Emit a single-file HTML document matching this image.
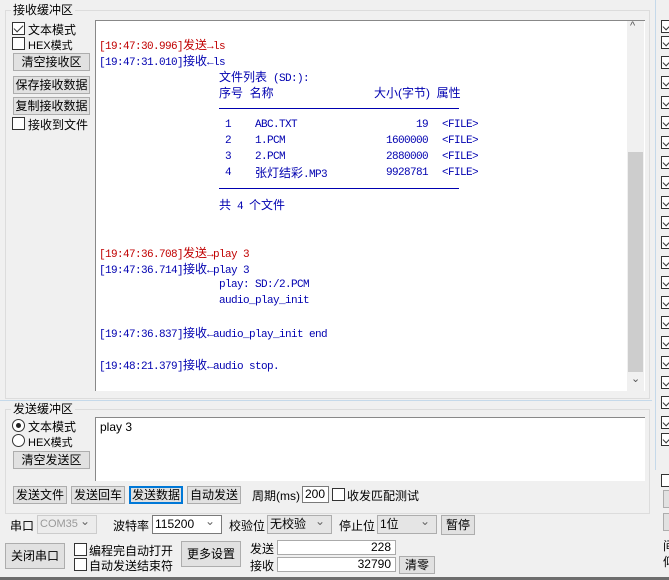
<!DOCTYPE html>
<html><head><meta charset="utf-8"><style>
*{margin:0;padding:0;box-sizing:border-box}
body{width:669px;height:580px;background:#f0f0f0;position:relative;overflow:hidden;font-family:"Liberation Sans","Noto Sans CJK SC",sans-serif;font-size:12px;color:#000}
.a{position:absolute;white-space:nowrap}
.grp{position:absolute;border:1px solid #dcdcdc}
.lbl{position:absolute;background:#f0f0f0;padding:0 2px;font-size:12px;line-height:14px}
.cb{position:absolute;width:13px;height:13px;border:1px solid #333;background:#fff}
.cb.c::after,.rcb::after{content:"";position:absolute;left:3px;top:0px;width:4px;height:8px;border:solid #333;border-width:0 1.5px 1.5px 0;transform:rotate(45deg)}
.rb{position:absolute;width:13px;height:13px;border:1px solid #333;border-radius:50%;background:#fff}
.rb.c::after{content:"";position:absolute;left:3px;top:3px;width:5px;height:5px;border-radius:50%;background:#222}
.btn{position:absolute;background:#e1e1e1;border:1px solid #adadad;text-align:center;font-size:12px}
.t{position:absolute;white-space:nowrap;font-family:"Liberation Mono","Noto Sans CJK SC",monospace;font-size:11px;letter-spacing:-0.6px;line-height:16px;color:#0000b0}
.t .z{font-family:"Liberation Sans","Noto Sans CJK SC",sans-serif;font-size:12px;letter-spacing:0}
.r{color:#c00000}
.inp{position:absolute;background:#fff;border:1px solid #7a7a7a;font-size:12px;padding-left:2px}
.sel{position:absolute;background:#fff;border:1px solid #7a7a7a;font-size:12px;padding-left:2px;line-height:17px}
.sel::after{content:"⌄";position:absolute;right:6px;top:-3px;color:#666;font-size:12px}
.rcb{position:absolute;left:661px;width:10px;height:13px;border:1px solid #333;background:#fff}
.rcb.u::after{display:none}
</style></head><body>
<div class="grp" style="left:5px;top:10px;width:645px;height:389px"></div>
<div class="lbl" style="left:11px;top:3px">接收缓冲区</div>
<div class="cb c" style="left:12px;top:22px"></div><div class="a" style="left:28px;top:21px">文本模式</div>
<div class="cb" style="left:12px;top:37px"></div><div class="a" style="left:28px;top:37px;font-size:11px">HEX模式</div>
<div class="btn" style="left:13px;top:53px;width:77px;height:18px;line-height:16px">清空接收区</div>
<div class="btn" style="left:13px;top:76px;width:77px;height:18px;line-height:16px">保存接收数据</div>
<div class="btn" style="left:13px;top:97px;width:77px;height:18px;line-height:16px">复制接收数据</div>
<div class="cb" style="left:12px;top:117px"></div><div class="a" style="left:28px;top:116px">接收到文件</div>
<div class="a" style="left:95px;top:20px;width:550px;height:371px;background:#fff;border-left:1px solid #888;border-top:1px solid #888"></div>
<div class="a" style="left:627px;top:21px;width:17px;height:370px;background:#f0f0f0"></div>
<div class="a" style="left:628px;top:152px;width:15px;height:220px;background:#cdcdcd"></div>
<div class="a" style="left:630px;top:20px;font-size:11px;color:#555">^</div>
<div class="a" style="left:631px;top:372px;font-size:11px;color:#555">⌄</div>
<div class="t r" style="left:99px;top:37px">[19:47:30.996]<span class="z">发送</span>→ls</div>
<div class="t" style="left:99px;top:53px">[19:47:31.010]<span class="z">接收</span>←ls</div>
<div class="t" style="left:219px;top:69px"><span class="z">文件列表</span> (SD:):</div>
<div class="t" style="left:219px;top:85px"><span class="z">序号&nbsp;&nbsp;名称</span></div>
<div class="t" style="left:374px;top:85px"><span class="z">大小(字节)&nbsp;&nbsp;属性</span></div>
<div class="a" style="left:219px;top:108px;width:240px;height:1px;background:#0000b0"></div>
<div class="t" style="left:225px;top:117px">1</div><div class="t" style="left:255px;top:117px">ABC.TXT</div><div class="t" style="left:416px;top:117px">19</div><div class="t" style="left:442px;top:117px">&lt;FILE&gt;</div>
<div class="t" style="left:225px;top:133px">2</div><div class="t" style="left:255px;top:133px">1.PCM</div><div class="t" style="left:386px;top:133px">1600000</div><div class="t" style="left:442px;top:133px">&lt;FILE&gt;</div>
<div class="t" style="left:225px;top:149px">3</div><div class="t" style="left:255px;top:149px">2.PCM</div><div class="t" style="left:386px;top:149px">2880000</div><div class="t" style="left:442px;top:149px">&lt;FILE&gt;</div>
<div class="t" style="left:225px;top:165px">4</div><div class="t" style="left:255px;top:165px"><span class="z">张灯结彩</span>.MP3</div><div class="t" style="left:386px;top:165px">9928781</div><div class="t" style="left:442px;top:165px">&lt;FILE&gt;</div>
<div class="a" style="left:219px;top:188px;width:240px;height:1px;background:#0000b0"></div>
<div class="t" style="left:219px;top:197px"><span class="z">共</span> 4 <span class="z">个文件</span></div>
<div class="t r" style="left:99px;top:245px">[19:47:36.708]<span class="z">发送</span>→play 3</div>
<div class="t" style="left:99px;top:261px">[19:47:36.714]<span class="z">接收</span>←play 3</div>
<div class="t" style="left:219px;top:277px">play: SD:/2.PCM</div>
<div class="t" style="left:219px;top:293px">audio_play_init</div>
<div class="t" style="left:99px;top:325px">[19:47:36.837]<span class="z">接收</span>←audio_play_init end</div>
<div class="t" style="left:99px;top:357px">[19:48:21.379]<span class="z">接收</span>←audio stop.</div>
<div class="a" style="left:0;top:400px;width:652px;height:1px;background:#c5d9ea"></div>
<div class="a" style="left:655px;top:0;width:1px;height:470px;background:#c5d9ea"></div>
<div class="grp" style="left:5px;top:409px;width:645px;height:105px"></div>
<div class="lbl" style="left:11px;top:402px">发送缓冲区</div>
<div class="rb c" style="left:12px;top:419px"></div><div class="a" style="left:28px;top:418px">文本模式</div>
<div class="rb" style="left:12px;top:434px"></div><div class="a" style="left:28px;top:434px;font-size:11px">HEX模式</div>
<div class="btn" style="left:13px;top:451px;width:77px;height:18px;line-height:16px">清空发送区</div>
<div class="a" style="left:95px;top:417px;width:550px;height:64px;background:#fff;border-left:1px solid #888;border-top:1px solid #888;padding:2px 4px">play 3</div>
<div class="btn" style="left:13px;top:486px;width:54px;height:18px;line-height:16px">发送文件</div>
<div class="btn" style="left:71px;top:486px;width:54px;height:18px;line-height:16px">发送回车</div>
<div class="btn" style="left:129px;top:486px;width:54px;height:18px;border:2px solid #0078d7;line-height:14px">发送数据</div>
<div class="btn" style="left:187px;top:486px;width:54px;height:18px;line-height:16px">自动发送</div>
<div class="a" style="left:252px;top:487px">周期(ms)</div>
<div class="inp" style="left:302px;top:486px;width:27px;height:17px;line-height:15px">200</div>
<div class="cb" style="left:332px;top:488px"></div><div class="a" style="left:347px;top:487px">收发匹配测试</div>
<div class="a" style="left:10px;top:517px">串口</div>
<div class="sel" style="left:37px;top:515px;width:60px;height:19px;background:#ececec;border-color:#ccc;color:#999;font-size:11px">COM35</div>
<div class="a" style="left:113px;top:517px">波特率</div>
<div class="sel" style="left:152px;top:515px;width:70px;height:19px">115200</div>
<div class="a" style="left:229px;top:517px">校验位</div>
<div class="sel" style="left:267px;top:515px;width:65px;height:19px;background:#e5e5e5;border-color:#adadad">无校验</div>
<div class="a" style="left:339px;top:517px">停止位</div>
<div class="sel" style="left:377px;top:515px;width:60px;height:19px;background:#e5e5e5;border-color:#adadad">1位</div>
<div class="btn" style="left:441px;top:515px;width:34px;height:20px;line-height:18px">暂停</div>
<div class="btn" style="left:5px;top:543px;width:60px;height:26px;line-height:24px">关闭串口</div>
<div class="cb" style="left:74px;top:543px"></div><div class="a" style="left:89px;top:542px">编程完自动打开</div>
<div class="cb" style="left:74px;top:558px"></div><div class="a" style="left:89px;top:557px">自动发送结束符</div>
<div class="btn" style="left:181px;top:541px;width:60px;height:26px;line-height:24px">更多设置</div>
<div class="a" style="left:250px;top:540px">发送</div>
<div class="a" style="left:250px;top:557px">接收</div>
<div class="inp" style="left:277px;top:540px;width:119px;height:15px;line-height:13px;text-align:right;padding-right:4px;border-color:#aaa">228</div>
<div class="inp" style="left:277px;top:557px;width:119px;height:15px;line-height:13px;text-align:right;padding-right:4px;border-color:#aaa">32790</div>
<div class="btn" style="left:399px;top:556px;width:36px;height:18px;line-height:16px">清零</div>
<div class="a" style="left:0;top:577px;width:669px;height:3px;background:#6d6d6d"></div>
<div class="rcb" style="top:20px"></div><div class="rcb" style="top:36px"></div><div class="rcb" style="top:56px"></div>
<div class="rcb" style="top:76px"></div><div class="rcb" style="top:96px"></div><div class="rcb" style="top:116px"></div>
<div class="rcb" style="top:136px"></div><div class="rcb" style="top:156px"></div><div class="rcb" style="top:176px"></div>
<div class="rcb" style="top:196px"></div><div class="rcb" style="top:216px"></div><div class="rcb" style="top:236px"></div>
<div class="rcb" style="top:256px"></div><div class="rcb" style="top:276px"></div><div class="rcb" style="top:296px"></div>
<div class="rcb" style="top:316px"></div><div class="rcb" style="top:336px"></div><div class="rcb" style="top:356px"></div>
<div class="rcb" style="top:376px"></div><div class="rcb" style="top:396px"></div><div class="rcb" style="top:416px"></div>
<div class="rcb" style="top:433px"></div><div class="rcb u" style="top:474px"></div>
<div class="btn" style="left:663px;top:490px;width:10px;height:18px"></div>
<div class="btn" style="left:663px;top:513px;width:10px;height:18px"></div>
<div class="a" style="left:663px;top:537px">间</div>
<div class="a" style="left:663px;top:553px">仰</div>
</body></html>
